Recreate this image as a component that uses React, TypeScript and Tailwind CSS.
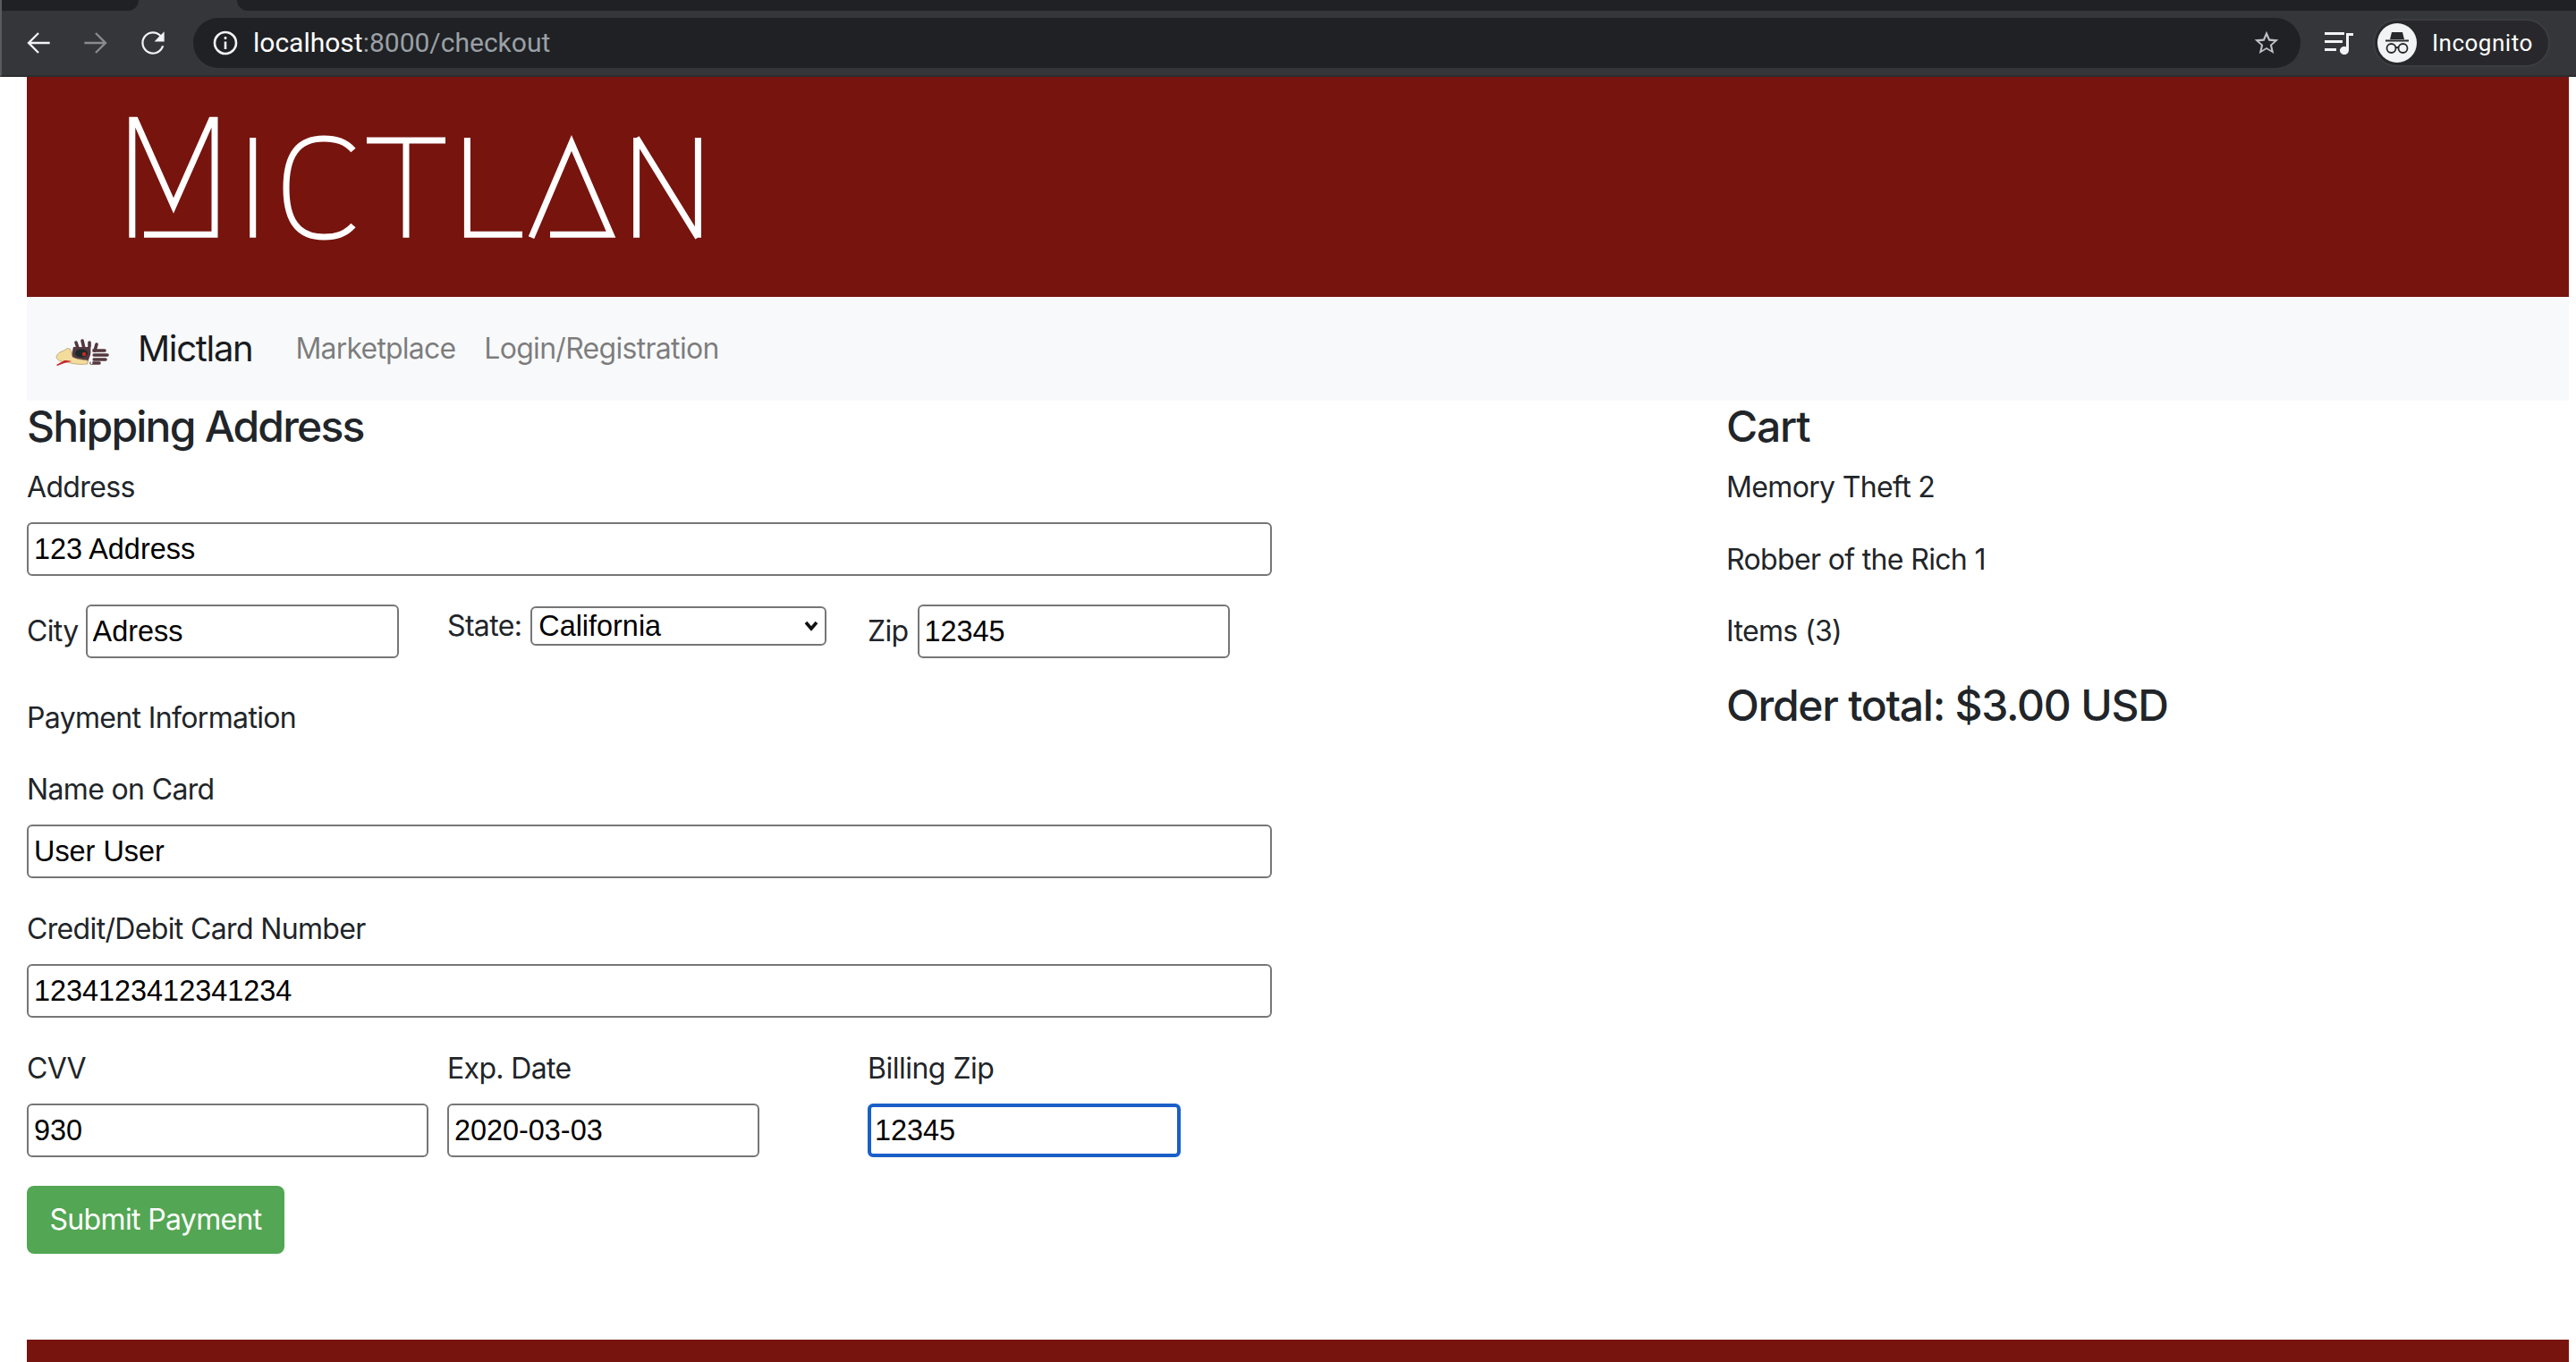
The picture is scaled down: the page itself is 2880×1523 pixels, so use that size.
import React from "react";

const inter = "font-['Inter',sans-serif]";
const fieldBase =
  "block h-[60px] rounded-[6px] bg-white text-[32.4px] text-black font-['Liberation_Sans',Arial,sans-serif] outline-none tracking-normal";
const field = `${fieldBase} border-2 border-[#767676] px-[6px]`;
const heading = "h-[58px] text-[48px] leading-[58px] font-medium";

function Logo() {
  const p = {
    fill: "none",
    stroke: "#fff",
    strokeWidth: 7,
    strokeLinejoin: "miter" as const,
    strokeMiterlimit: 10,
  };
  return (
    <svg width="720" height="200" viewBox="0 0 720 200" className="block">
      <defs>
        <clipPath id="mclip">
          <rect x="0" y="30.7" width="200" height="170" />
        </clipPath>
      </defs>
      <g clipPath="url(#mclip)">
        <path {...p} d="M47.800 165.700V30M47.800 26L94 130 140 26M140 30V162.300H61" />
      </g>
      <path {...p} d="M182.700 54V165.700" />
      <path {...p} d="M295 68C286 58 276 55 262 55 232 55 220 75 220 110 220 145 232 165 262 165 276 165 286 162 295 152" />
      <path {...p} d="M310 57H398M354 57V165.700" />
      <path {...p} d="M422.400 54V162.300H484" />
      <path {...p} d="M494 165.700L539 60 583 162.300H515" />
      <path {...p} d="M611.600 54V165.700M611.600 54L680.400 165.700M680.400 54V165.700" />
    </svg>
  );
}

function Bird() {
  return (
    <svg width="80" height="50" viewBox="0 0 80 50" className="block mt-[10px]" style={{ filter: "blur(0.6px)" }}>
      <g stroke="#54383f" strokeWidth="3.600" strokeLinecap="round" fill="none">
        <path d="M33 22L30 13M39 20L37 11M45 20L45 13M51 22L53 15" />
        <path d="M49 22H62M50 27H65M50 32H63M47 36H56" />
      </g>
      <path d="M27 18h19l1 6-4 11H28q-3-2-3-8z" fill="#54383f" />
      <path d="M46.500 18h1.800v19h-1.800z" fill="#fff" />
      <path d="M8 30c0-4 4-7 9-8 1-2 4-3 6-2 2 2 2 5 3 9 3 2 9 3 17 4v4c-9 1-17 0-23-2-5-1-9 0-12-5z" fill="#f3dc9c" stroke="#9a8a5c" strokeWidth="0.600" />
      <ellipse cx="36" cy="25" rx="7" ry="4.500" fill="#1c2a2a" />
      <circle cx="39" cy="26" r="2.200" fill="#c92a2a" />
      <path d="M8 38l9-5c2 0 6 0 8 1l-8 2-8 3z" fill="#c8262c" />
    </svg>
  );
}

function Chrome() {
  return (
    <div className="h-[86px] bg-[#35363a] border-l-2 border-b-[2px] border-l-[#5a5b5f] border-b-[#2c2d30] flex flex-col tracking-normal">
      <div className="h-[12px] flex">
        <div className="w-[153px] bg-[#202124] rounded-br-[12px]" />
        <div className="w-[110px]" />
        <div className="flex-1 bg-[#202124] rounded-bl-[12px]" />
      </div>
      <div className="flex-1 flex items-center">
        <div className="w-[214px] flex items-center pl-[22px] gap-[26px]">
          <svg width="38" height="38" viewBox="0 0 24 24" fill="#f1f3f4"><path d="M20 11.200H6.900l5.600-5.600-1-1L4 12l7.500 7.400 1-1-5.600-5.600H20z" /></svg>
          <svg width="38" height="38" viewBox="0 0 24 24" fill="#8a8b8e"><path d="M4 11.200h13.100l-5.600-5.600 1-1L20 12l-7.500 7.400-1-1 5.600-5.600H4z" /></svg>
          <svg width="38" height="38" viewBox="0 0 24 24" fill="#f1f3f4"><path d="M17.650 6.350C16.200 4.900 14.210 4 12 4c-4.420 0-7.990 3.580-7.990 8s3.570 8 7.990 8c3.730 0 6.840-2.550 7.730-6h-1.500c-.82 2.600-3.300 4.600-6.230 4.600-3.600 0-6.600-3-6.600-6.600s3-6.600 6.600-6.600c1.800 0 3.400.7 4.600 1.900L13 11h7V4l-2.350 2.350z" /></svg>
        </div>
        <div className="w-[2356px] h-[56px] rounded-[28px] bg-[#202124] flex items-center pl-[22px] pr-[22px]">
          <svg width="28" height="28" viewBox="0 0 28 28" fill="none" stroke="#f1f3f4" strokeWidth="2.600">
            <circle cx="14" cy="14" r="12" />
            <path d="M14 12.500V21M14 7v3" />
          </svg>
          <span className="ml-[17px] text-[30px] font-['Roboto',sans-serif] text-white">
            localhost<span className="text-[#9aa0a6]">:8000/checkout</span>
          </span>
          <svg className="ml-auto" width="32" height="32" viewBox="0 0 24 24" fill="#bdc1c6">
            <path d="M22 9.240l-7.190-.62L12 2 9.190 8.630 2 9.240l5.460 4.730L5.820 21 12 17.270 18.180 21l-1.630-7.030L22 9.240zM12 15.800l-3.900 2.350 1.030-4.440-3.440-2.980 4.540-.39L12 6.100l1.770 4.240 4.540.39-3.440 2.980 1.030 4.440L12 15.800z" />
          </svg>
        </div>
        <svg className="ml-[27px]" width="34" height="26" viewBox="0 0 34 26" fill="#f1f3f4">
          <rect x="0" y="1" width="22" height="3" />
          <rect x="0" y="10" width="20" height="3" />
          <rect x="0" y="19" width="13" height="3" />
          <path d="M24 2h8v3h-5v16c0 3-2.400 5-5 5s-5-2-5-4.500 2.300-4.500 5-4.500c.7 0 1.400.100 2 .400z" />
        </svg>
        <div className="ml-[20px] w-[198px] h-[54px] rounded-[27px] bg-[#28282c] border-2 border-[#3c3d41] flex items-center pl-[3px]">
          <div className="w-[44px] h-[44px] rounded-full bg-[#f1f3f4] flex items-center justify-center">
            <svg width="30" height="30" viewBox="0 0 30 30" fill="none">
              <path d="M9 3h12l2 8H7zM2 11.500h26v2H2z" fill="#28282c" />
              <circle cx="8.500" cy="21" r="5" stroke="#28282c" strokeWidth="1.800" />
              <circle cx="21.500" cy="21" r="5" stroke="#28282c" strokeWidth="1.800" />
              <path d="M13 20.500q2-1 4 0" stroke="#28282c" strokeWidth="1.800" />
            </svg>
          </div>
          <span className="ml-[17px] text-[26px] font-['Roboto',sans-serif] text-white tracking-[0.5px]">Incognito</span>
        </div>
      </div>
    </div>
  );
}

export default function App() {
  return (
    <div className={`w-[2880px] h-[1523px] overflow-hidden bg-white ${inter} text-[32px] leading-[48px] tracking-[-0.65px] text-[#212529]`}>
      <Chrome />
      <div className="pl-[30px] pr-[8px]">
        <header className="h-[246px] bg-[#77140e] pl-[70px] pt-[14px]">
          <Logo />
        </header>
        <nav className="h-[116px] bg-[#f8f9fa] flex items-center pl-[25px]">
          <Bird />
          <span className="ml-[19px] text-[40px] text-[#191c1f] tracking-[-1.3px]">Mictlan</span>
          <span className="ml-[48px] text-[#00000080] tracking-[-0.8px]">Marketplace</span>
          <span className="ml-[32px] text-[#00000080] tracking-[-0.7px]">Login/Registration</span>
        </nav>
        <main className="flex">
          <section className="w-[1900px] shrink-0">
            <h2 className={`${heading} tracking-[-1.8px]`}>Shipping Address</h2>
            <label className="block mt-[15px]">Address</label>
            <input className={`${field} w-[1392px] mt-[15px]`} defaultValue="123 Address" />
            <div className="flex items-start mt-[32px] h-[60px]">
              <div className="w-[470px] flex items-center h-[60px]">
                <label>City</label>
                <input className={`${field} w-[350px] ml-[8px]`} defaultValue="Adress" />
              </div>
              <div className="w-[470px] flex items-center h-[44px] mt-[2px]">
                <label>State:</label>
                <div className="relative ml-[10px]">
                  <select
                    className="block appearance-none w-[331px] h-[44px] border-2 border-[#767676] rounded-[6px] bg-white text-[32.4px] leading-[36px] text-black font-['Liberation_Sans',Arial,sans-serif] tracking-normal pl-[7px] pb-[1px]"
                    defaultValue="California"
                  >
                    <option>California</option>
                  </select>
                  <svg className="absolute right-[9px] top-[15px]" width="16" height="14" viewBox="0 0 16 14" fill="none" stroke="#111" strokeWidth="3.600">
                    <path d="M2 3l6 7 6-7" />
                  </svg>
                </div>
              </div>
              <div className="flex items-center h-[60px]">
                <label>Zip</label>
                <input className={`${field} w-[349px] ml-[10px]`} defaultValue="12345" />
              </div>
            </div>
            <p className="mt-[43px]">Payment Information</p>
            <label className="block mt-[32px]">Name on Card</label>
            <input className={`${field} w-[1392px] mt-[15px]`} defaultValue="User User" />
            <label className="block mt-[33px]">Credit/Debit Card Number</label>
            <input className={`${field} w-[1392px] mt-[15px]`} defaultValue="1234123412341234" />
            <div className="flex mt-[33px]">
              <div className="w-[470px]">
                <label className="block">CVV</label>
                <input className={`${field} w-[449px] mt-[15px]`} defaultValue="930" />
              </div>
              <div className="w-[470px]">
                <label className="block">Exp. Date</label>
                <input className={`${field} w-[349px] mt-[15px]`} defaultValue="2020-03-03" />
              </div>
              <div>
                <label className="block tracking-[-0.5px]">Billing Zip</label>
                <input
                  className={`${fieldBase} w-[350px] mt-[15px] border-4 border-[#1a5fc8] px-[4px]`}
                  defaultValue="12345"
                />
              </div>
            </div>
            <button className="block mt-[32px] w-[288px] h-[76px] rounded-[8px] bg-[#53a653] text-white text-[32px]">
              Submit Payment
            </button>
          </section>
          <aside>
            <h2 className={`${heading} tracking-[-1.2px]`}>Cart</h2>
            <p className="mt-[15px]">Memory Theft 2</p>
            <p className="mt-[33px]">Robber of the Rich 1</p>
            <p className="mt-[32px]">Items (3)</p>
            <h2 className={`mt-[30px] ${heading} tracking-[-1.25px]`}>Order total: $3.00 USD</h2>
          </aside>
        </main>
        <footer className="mt-[96px] h-[30px] bg-[#77140e]" />
      </div>
    </div>
  );
}
